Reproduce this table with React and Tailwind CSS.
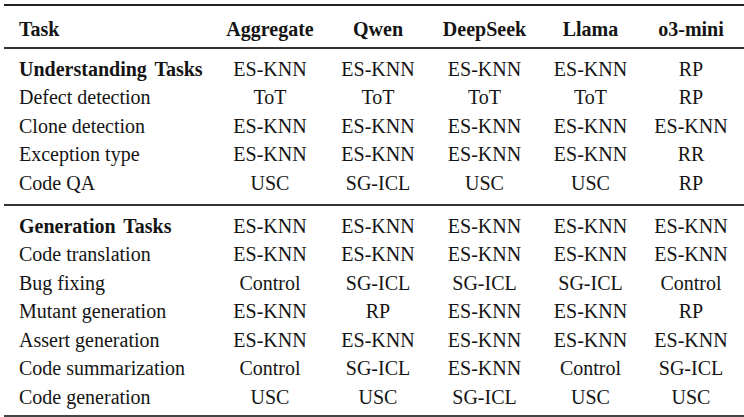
import React from "react";

/* ──────── table data ──────── */
const columns = ["Aggregate", "Qwen", "DeepSeek", "Llama", "o3-mini"];

const groups = [
  {
    title: "Understanding Tasks",
    summary: ["ES-KNN", "ES-KNN", "ES-KNN", "ES-KNN", "RP"],
    rows: [
      ["Defect detection", "ToT", "ToT", "ToT", "ToT", "RP"],
      ["Clone detection", "ES-KNN", "ES-KNN", "ES-KNN", "ES-KNN", "ES-KNN"],
      ["Exception type", "ES-KNN", "ES-KNN", "ES-KNN", "ES-KNN", "RR"],
      ["Code QA", "USC", "SG-ICL", "USC", "USC", "RP"],
    ],
  },
  {
    title: "Generation Tasks",
    summary: ["ES-KNN", "ES-KNN", "ES-KNN", "ES-KNN", "ES-KNN"],
    rows: [
      ["Code translation", "ES-KNN", "ES-KNN", "ES-KNN", "ES-KNN", "ES-KNN"],
      ["Bug fixing", "Control", "SG-ICL", "SG-ICL", "SG-ICL", "Control"],
      ["Mutant generation", "ES-KNN", "RP", "ES-KNN", "ES-KNN", "RP"],
      ["Assert generation", "ES-KNN", "ES-KNN", "ES-KNN", "ES-KNN", "ES-KNN"],
      ["Code summarization", "Control", "SG-ICL", "ES-KNN", "Control", "SG-ICL"],
      ["Code generation", "USC", "USC", "SG-ICL", "USC", "USC"],
    ],
  },
];

const gridCols = "grid grid-cols-[212px_108px_108px_105px_107px_100px]";

const Row = ({ cells, bold = false, header = false }) => (
  <div className={`${gridCols} ${header ? "h-[41px]" : "h-[28.5px]"} items-center`}>
    {cells.map((c, i) => (
      <div
        key={i}
        className={`
          ${i === 0 ? "pl-[15px] text-left" : "text-center"}
          ${i === 5 ? "pr-[6px]" : ""}
          ${(bold && i === 0) || header ? "font-bold" : ""}
          ${bold && i === 0 ? "[word-spacing:3px]" : ""}
          ${header ? "pt-[4px]" : ""}
          whitespace-nowrap
        `}
      >
        {c}
      </div>
    ))}
  </div>
);

const App = () => {
  return (
    <div
      className="w-[744px] h-[417px] bg-white text-[#141414] text-[20px] leading-none overflow-hidden"
      style={{ fontFamily: '"Liberation Serif", "Times New Roman", serif' }}
    >
      <div className="ml-[4px] w-[740px] pt-[4px]">
        {/* top rule */}
        <div className="h-[2px] bg-[#222]" />
        <Row cells={["Task", ...columns]} header />
        <div className="h-[1.5px] bg-[#333]" />

        {groups.map((g, gi) => (
          <div key={g.title}>
            {gi > 0 && <div className="h-[1.5px] bg-[#333]" />}
            <div className={gi === 0 ? "pt-[6px] pb-[7px]" : "pt-[6px] pb-[4px]"}>
              <Row cells={[g.title, ...g.summary]} bold />
              {g.rows.map((r) => (
                <Row key={r[0]} cells={r} />
              ))}
            </div>
          </div>
        ))}

        {/* bottom rule */}
        <div className="h-[2px] bg-[#444]" />
      </div>
    </div>
  );
};

export default App;
